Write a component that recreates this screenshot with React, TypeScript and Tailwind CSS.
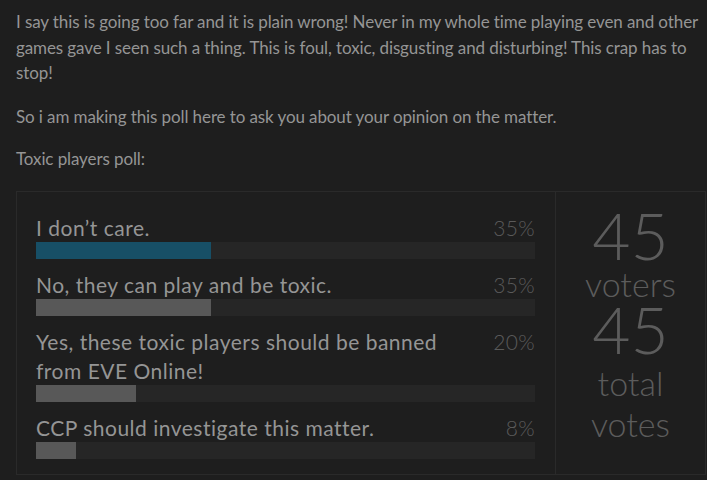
import React from "react";

const options = [
  { label: "I don’t care.", pct: 35, color: "bg-[#174f66]" },
  { label: "No, they can play and be toxic.", pct: 35, color: "bg-[#585858]" },
  { label: "Yes, these toxic players should be banned from EVE Online!", pct: 20, color: "bg-[#585858]" },
  { label: "CCP should investigate this matter.", pct: 8, color: "bg-[#585858]" },
];

export default function App() {
  return (
    <div
      className="w-[707px] h-[480px] overflow-hidden bg-[#1e1e1e] text-[#959595]"
      style={{ fontFamily: "Lato, 'Open Sans', sans-serif" }}
    >
      <div className="pl-4 pr-[3px] pt-[9px]">
        <p className="text-[17px] leading-[25.5px] tracking-[-0.1px]">
          I say this is going too far and it is plain wrong! Never in my whole time playing even and other games gave I seen such a thing. This is foul, toxic, disgusting and disturbing! This crap has to stop!
        </p>
        <p className="text-[17px] leading-[25.5px] tracking-[-0.1px] mt-[18px]">
          So i am making this poll here to ask you about your opinion on the matter.
        </p>
        <p className="text-[17px] leading-[25.5px] tracking-[-0.1px] mt-[17px]">Toxic players poll:</p>
        <div className="mt-[19px] w-[690px] border border-[#2a2a2a] flex">
          <div className="w-[538px] pl-[19px] pr-[20px] pt-[21px] pb-[15px] flex flex-col gap-[11px]">
            {options.map((o) => (
              <div key={o.label} className="flex flex-col">
                <div className="flex items-start justify-between text-[21px] leading-[29px]">
                  <span className="w-[430px] tracking-[0.5px]">{o.label}</span>
                  <span className="text-[#5a5a5a] font-light tracking-[0.3px]">{o.pct}%</span>
                </div>
                <div className="h-[17px] bg-[#262626] w-full">
                  <div className={`h-full ${o.color}`} style={{ width: `${o.pct}%` }} />
                </div>
              </div>
            ))}
          </div>
          <div className="flex-1 border-l border-[#2a2a2a] flex flex-col items-center text-[#5c5c5c] pt-[19.5px]">
            <div className="text-[66px] leading-[48px] font-light">45</div>
            <div className="text-[34px] leading-[36px] font-light mt-[7px]">voters</div>
            <div className="text-[66px] leading-[48px] font-light mt-[3px]">45</div>
            <div className="text-[34px] leading-[41px] font-light text-center w-[100px] mt-[9px]">total votes</div>
          </div>
        </div>
      </div>
    </div>
  );
}
